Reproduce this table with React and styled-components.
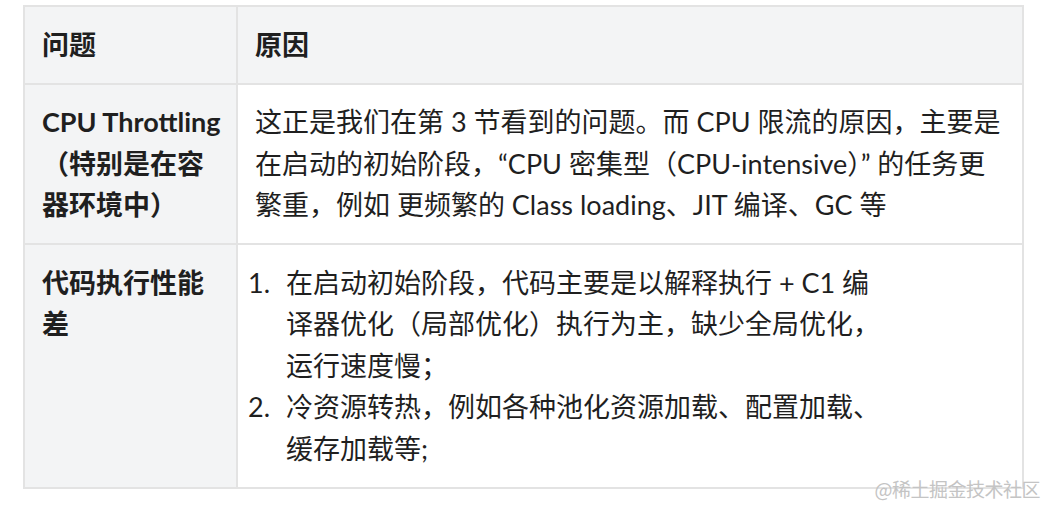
import React from "react";
import styled, { createGlobalStyle } from "styled-components";

const Global = createGlobalStyle`
  html, body { margin: 0; padding: 0; background: #ffffff; }
  #root { width: 1046px; height: 506px; }
`;

const Page = styled.div`
  position: relative;
  width: 1046px;
  height: 506px;
  box-sizing: border-box;
  padding: 5px 0 0 23px;
  font-family: "Lato", "Noto Sans CJK SC", sans-serif;
  color: #1f1f1f;
  overflow: hidden;
`;

const Table = styled.table`
  width: 999px;
  border-collapse: collapse;
  border: 2px solid #e3e3e3;
  font-size: 27px;
  line-height: 41.5px;
  table-layout: fixed;
`;

const Col = styled.col`
  width: ${(p) => p.$w}px;
`;

const Cell = styled.td`
  border: 2px solid #e3e3e3;
  padding: 16.5px ${(p) => (p.$first ? 11 : 17)}px 17.5px 17px;
  vertical-align: top;
  text-align: left;
  background: ${(p) => (p.$shade ? "#f3f4f5" : "#ffffff")};
  font-weight: ${(p) => (p.$bold ? 700 : 400)};
`;

const List = styled.ol`
  list-style: none;
  margin: 0 0 0 -7px;
  padding: 0;
  width: 640px;
`;

const Item = styled.li`
  display: flex;
`;

const Marker = styled.span`
  flex: 0 0 38px;
`;

const ItemText = styled.span`
  flex: 0 0 600px;
`;

const Watermark = styled.div`
  position: absolute;
  right: 6px;
  bottom: 5px;
  font-family: "Noto Sans CJK SC", sans-serif;
  font-size: 19px;
  line-height: 24px;
  color: #c4c4c4;
  letter-spacing: -0.5px;
`;

export default function App() {
  return (
    <>
      <Global />
      <Page>
        <Table>
          <colgroup>
            <Col $w={213} />
            <Col $w={786} />
          </colgroup>
          <tbody>
            <tr>
              <Cell $shade $bold $first>问题</Cell>
              <Cell $shade $bold>原因</Cell>
            </tr>
            <tr>
              <Cell $shade $bold $first>CPU Throttling（特别是在容器环境中）</Cell>
              <Cell>
                这正是我们在第 3 节看到的问题。而 CPU 限流的原因，主要是在启动的初始阶段，“CPU 密集型（CPU-intensive）” 的任务更繁重，例如 更频繁的 Class loading、JIT 编译、GC 等
              </Cell>
            </tr>
            <tr>
              <Cell $shade $bold $first>代码执行性能差</Cell>
              <Cell>
                <List>
                  <Item>
                    <Marker>1.</Marker>
                    <ItemText>
                      在启动初始阶段，代码主要是以解释执行 + C1 编译器优化（局部优化）执行为主，缺少全局优化，运行速度慢；
                    </ItemText>
                  </Item>
                  <Item>
                    <Marker>2.</Marker>
                    <ItemText>冷资源转热，例如各种池化资源加载、配置加载、缓存加载等;</ItemText>
                  </Item>
                </List>
              </Cell>
            </tr>
          </tbody>
        </Table>
        <Watermark>@稀土掘金技术社区</Watermark>
      </Page>
    </>
  );
}
